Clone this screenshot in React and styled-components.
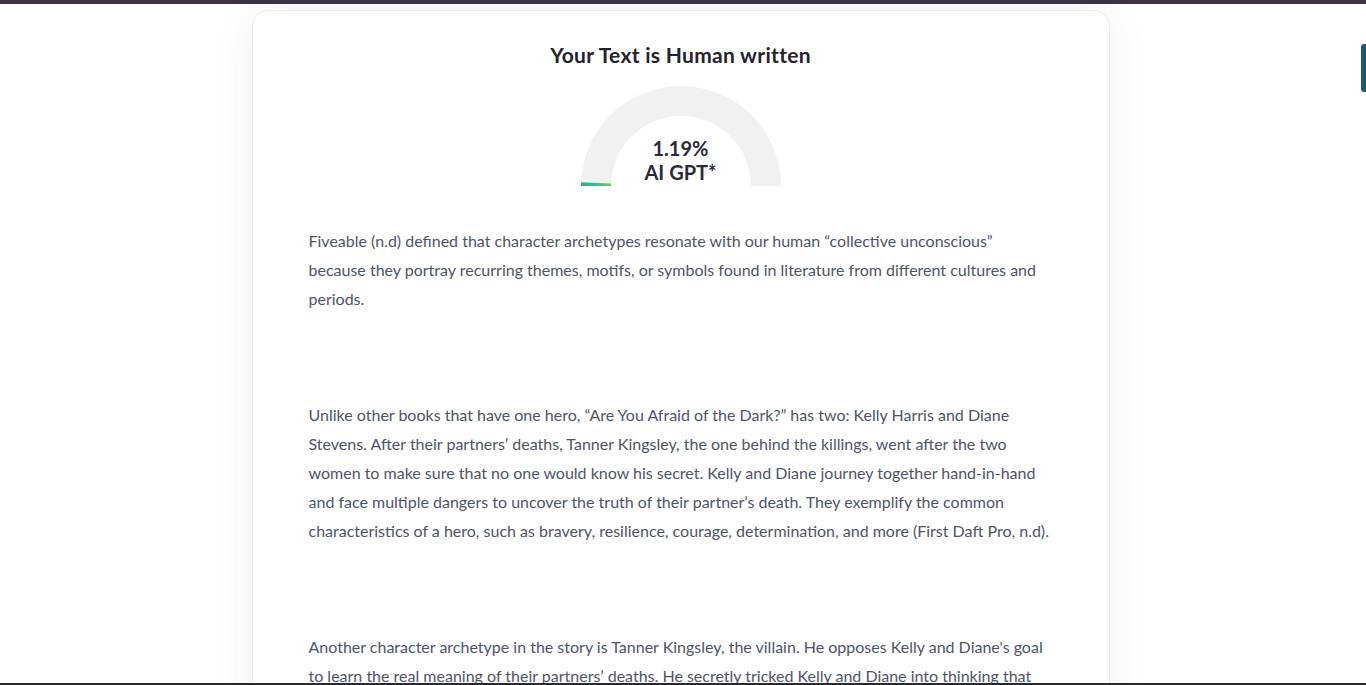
import styled, { createGlobalStyle } from "styled-components";

const Global = createGlobalStyle`
  html, body {
    margin: 0;
    padding: 0;
    background: #fff;
    height: 685px;
    overflow: hidden;
  }
  body {
    font-family: Lato, "Noto Sans", sans-serif;
  }
`;

const TopBar = styled.div`
  height: 4px;
  background: #3d3346;
`;

const BottomBar = styled.div`
  position: fixed;
  left: 0;
  right: 0;
  bottom: 0;
  height: 2px;
  background: #2a2a2e;
`;

const ScrollThumb = styled.div`
  position: fixed;
  right: 0;
  top: 44px;
  width: 5px;
  height: 48px;
  border-radius: 3px 0 0 3px;
  background: #175b7d;
`;

const Page = styled.main`
  display: flex;
  justify-content: center;
  padding: 6px 5px 0 0;
`;

const Card = styled.section`
  width: 858px;
  box-sizing: border-box;
  padding: 30px 56px 40px;
  border: 1px solid #ece9f5;
  border-radius: 16px;
  background: #fff;
  box-shadow: 0 0 40px rgba(60, 60, 90, 0.07);
`;

const Title = styled.h2`
  margin: 0;
  text-align: center;
  font-size: 21px;
  letter-spacing: 0.3px;
  font-weight: 700;
  color: #23232e;
  line-height: 28px;
`;

const GaugeWrap = styled.div`
  position: relative;
  width: 200px;
  height: 100px;
  margin: 17px auto 0;
`;

const GaugeLabel = styled.div`
  position: absolute;
  left: 0;
  right: 0;
  bottom: 2px;
  text-align: center;
  font-size: 20px;
  font-weight: 700;
  line-height: 24px;
  color: #2b2b38;
`;

const Body = styled.div`
  margin-top: 40px;
`;

const Para = styled.p`
  margin: 0 0 87px;
  font-size: 16px;
  line-height: 29px;
  color: #4d5569;
`;

const Gauge = ({ value }) => {
  const angle = Math.PI * (1 - value / 100);
  const ox = 100 + 100 * Math.cos(angle);
  const oy = 100 - 100 * Math.sin(angle);
  const ix = 100 + 70 * Math.cos(angle);
  const iy = 100 - 70 * Math.sin(angle);
  return (
    <GaugeWrap>
      <svg width="200" height="100" viewBox="0 0 200 100">
        <defs>
          <linearGradient id="g" x1="0" x2="1">
            <stop offset="0" stopColor="#1fb58f" />
            <stop offset="1" stopColor="#5fcf6a" />
          </linearGradient>
        </defs>
        <path d="M0 100 A100 100 0 0 1 200 100 L170 100 A70 70 0 0 0 30 100 Z" fill="#f1f1f1" />
        <path d={`M0 100 A100 100 0 0 1 ${ox} ${oy} L${ix} ${iy} A70 70 0 0 0 30 100 Z`} fill="url(#g)" />
      </svg>
      <GaugeLabel>
        {value}%<br />AI GPT*
      </GaugeLabel>
    </GaugeWrap>
  );
};

const paragraphs = [
  "Fiveable (n.d) defined that character archetypes resonate with our human \u201ccollective unconscious\u201d because they portray recurring themes, motifs, or symbols found in literature from different cultures and periods.",
  "Unlike other books that have one hero, \u201cAre You Afraid of the Dark?\u201d has two: Kelly Harris and Diane Stevens. After their partners\u2019 deaths, Tanner Kingsley, the one behind the killings, went after the two women to make sure that no one would know his secret. Kelly and Diane journey together hand-in-hand and face multiple dangers to uncover the truth of their partner\u2019s death. They exemplify the common characteristics of a hero, such as bravery, resilience, courage, determination, and more (First Daft Pro, n.d).",
  "Another character archetype in the story is Tanner Kingsley, the villain. He opposes Kelly and Diane's goal to learn the real meaning of their partners\u2019 deaths. He secretly tricked Kelly and Diane into thinking that they were safe, while he sent his men to follow them wherever they went.",
];

export default function App() {
  return (
    <>
      <Global />
      <TopBar />
      <Page>
        <Card>
          <Title>Your Text is Human written</Title>
          <Gauge value={1.19} />
          <Body>
            {paragraphs.map((t, i) => (
              <Para key={i}>{t}</Para>
            ))}
          </Body>
        </Card>
      </Page>
      <ScrollThumb />
      <BottomBar />
    </>
  );
}
